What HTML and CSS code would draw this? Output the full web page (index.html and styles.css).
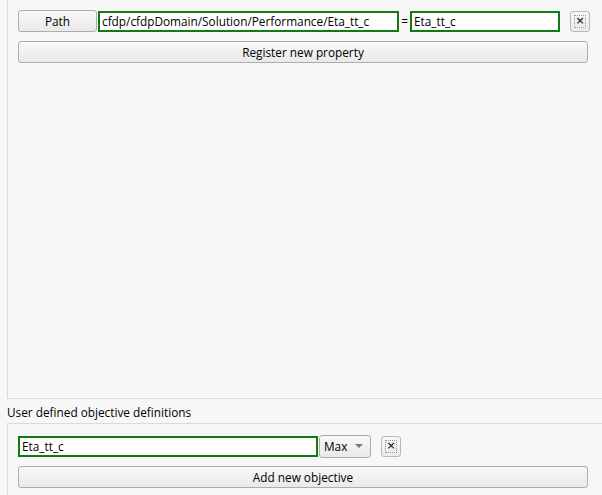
FILE: index.html
```html
<!DOCTYPE html>
<html>
<head>
<meta charset="utf-8">
<link rel="stylesheet" href="styles.css">
</head>
<body>
<div class="frame top-frame">
  <div class="row">
    <button class="btn path-btn">Path</button>
    <div class="field path-field">cfdp/cfdpDomain/Solution/Performance/Eta_tt_c</div>
    <span class="eq">=</span>
    <div class="field name-field">Eta_tt_c</div>
    <button class="close-btn"><span class="close-inner">×</span></button>
  </div>
  <button class="btn wide-btn">Register new property</button>
</div>
<div class="section-label">User defined objective definitions</div>
<div class="frame bottom-frame">
  <div class="row">
    <div class="field obj-field">Eta_tt_c</div>
    <div class="combo">Max<span class="arrow"></span></div>
    <button class="close-btn close-btn2"><span class="close-inner">×</span></button>
  </div>
  <button class="btn wide-btn">Add new objective</button>
</div>
</body>
</html>
```
FILE: styles.css
```css
html, body {
  margin: 0;
  padding: 0;
  background: #f7f7f7;
  font-family: "Open Sans", "Noto Sans", sans-serif;
  font-size: 11.8px;
  color: #000;
  width: 602px;
  height: 495px;
  overflow: hidden;
}
.frame {
  margin-left: 7px;
  border-left: 1px solid #dadada;
  box-sizing: border-box;
}
.top-frame {
  height: 399px;
  border-bottom: 1px solid #dadada;
  padding: 10px 0 0 10px;
}
.bottom-frame {
  border-top: 1px solid #dadada;
  padding: 11px 0 0 10px;
  height: 72px;
}
.row {
  display: flex;
  align-items: center;
  height: 22px;
}
.btn {
  font-family: inherit;
  font-size: 11.8px;
  color: #000;
  border: 1px solid #adadad;
  border-radius: 3px;
  background: linear-gradient(#f8f8f8, #e9e9e9);
  height: 22px;
  padding: 0;
  box-sizing: border-box;
}
.path-btn {
  width: 79px;
}
.field {
  box-sizing: border-box;
  height: 21px;
  border: 2px solid #117a11;
  background: #fff;
  padding-left: 2px;
  line-height: 17px;
  white-space: nowrap;
  overflow: hidden;
}
.path-field {
  width: 301px;
  margin-left: 1px;
}
.eq {
  width: 11px;
  text-align: center;
}
.name-field {
  width: 150px;
}
.close-btn {
  margin-left: 10px;
  width: 20px;
  height: 21px;
  border: 1px solid #b9b9b9;
  border-radius: 3px;
  background: linear-gradient(#f8f8f8, #ebebeb);
  padding: 2px;
  box-sizing: border-box;
  display: flex;
  align-items: center;
  justify-content: center;
}
.close-inner {
  width: 12px;
  height: 13px;
  border: 1px dotted #9a9a9a;
  box-sizing: border-box;
  font-size: 11px;
  font-weight: bold;
  line-height: 10px;
  color: #333;
  display: flex;
  align-items: center;
  justify-content: center;
  font-family: "DejaVu Sans", sans-serif;
}
.wide-btn {
  display: block;
  width: 570px;
  margin-top: 9px;
}
.section-label {
  height: 24px;
  line-height: 27px;
  padding-left: 7px;
}
.obj-field {
  width: 300px;
}
.combo {
  box-sizing: border-box;
  width: 52px;
  height: 23px;
  margin-left: 1px;
  border: 1px solid #adadad;
  border-radius: 3px;
  background: linear-gradient(#f8f8f8, #e9e9e9);
  padding-left: 4px;
  line-height: 21px;
  display: flex;
  align-items: center;
  justify-content: space-between;
  padding-right: 7px;
}
.arrow {
  width: 0;
  height: 0;
  border-left: 4px solid transparent;
  border-right: 4px solid transparent;
  border-top: 4px solid #7a7a7a;
}
.close-btn2 {
  margin-left: 10px;
}
```
